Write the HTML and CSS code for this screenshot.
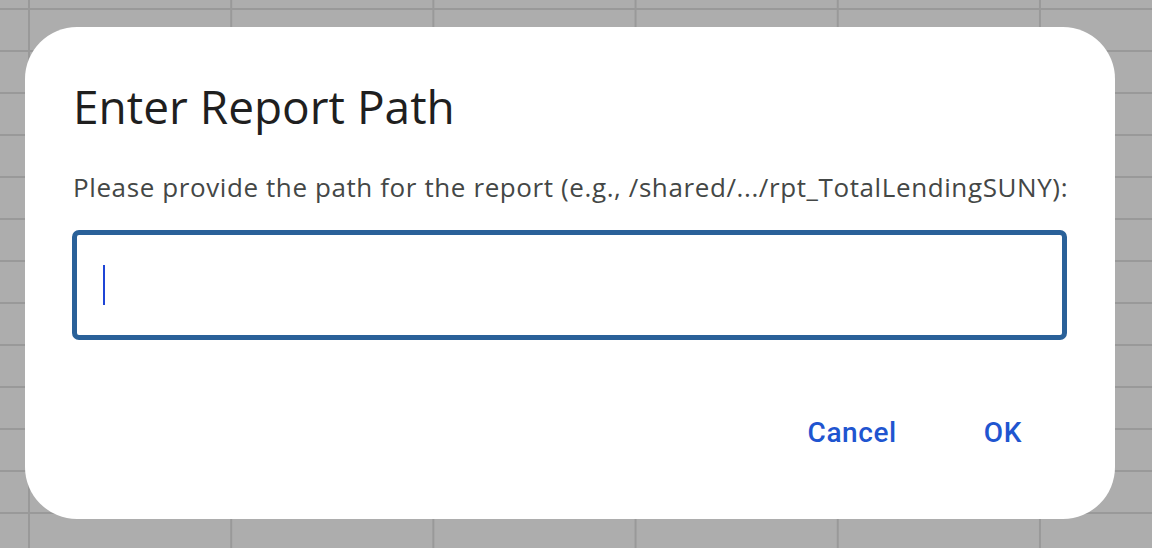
FILE: index.html
```html
<!DOCTYPE html>
<html>
<head>
<meta charset="utf-8">
<link rel="stylesheet" href="styles.css">
</head>
<body>
<div class="sheet">
  <div class="dialog">
    <h1 class="title">Enter Report Path</h1>
    <p class="prompt">Please provide the path for the report (e.g., /shared/.../rpt_TotalLendingSUNY):</p>
    <div class="field"><span class="caret"></span></div>
    <div class="actions">
      <button class="btn">Cancel</button>
      <button class="btn ok">OK</button>
    </div>
  </div>
</div>
</body>
</html>
```
FILE: styles.css
```css
html, body {
  margin: 0;
  padding: 0;
  width: 1152px;
  height: 548px;
  overflow: hidden;
}
.sheet {
  width: 1152px;
  height: 548px;
  background-color: #adadad;
  background-image:
    linear-gradient(to right, #999 0, #999 2px, transparent 2px),
    linear-gradient(to bottom, #999 0, #999 2px, transparent 2px);
  background-size: 202.2px 42px, 202.2px 42px;
  background-position: 28px 0, 0 8px;
  padding: 27px 37px 29px 25px;
  box-sizing: border-box;
}
.dialog {
  background: #fff;
  border-radius: 52px;
  height: 492px;
  box-sizing: border-box;
  padding: 76px 48px 0 48px;
  display: flex;
  flex-direction: column;
  font-family: Roboto, "Liberation Sans", sans-serif;
}
.title {
  margin: 0;
  font-family: "Open Sans", Roboto, sans-serif;
  font-weight: 400;
  font-size: 46px;
  line-height: 56px;
  color: #1f1f1f;
  margin-top: -25px;
}
.prompt {
  margin: 0;
  margin-top: 37px;
  font-family: "Open Sans", Roboto, sans-serif;
  font-size: 26px;
  line-height: 32px;
  color: #444746;
  letter-spacing: 0.6px;
  white-space: nowrap;
}
.field {
  margin-top: 27px;
  margin-left: -1px;
  height: 110px;
  border: 5px solid #2a6199;
  border-radius: 7px;
  box-sizing: border-box;
  display: flex;
  align-items: center;
  padding-left: 26px;
}
.caret {
  width: 2px;
  height: 40px;
  background: #1f45d6;
}
.actions {
  display: flex;
  justify-content: flex-end;
  margin-top: 77px;
  padding-right: 45px;
}
.btn {
  border: none;
  background: none;
  padding: 0;
  font-family: Roboto, sans-serif;
  font-weight: 500;
  font-size: 28px;
  line-height: 32px;
  color: #1f55d0;
  letter-spacing: 0.6px;
}
.btn.ok {
  margin-left: 87px;
}
```
